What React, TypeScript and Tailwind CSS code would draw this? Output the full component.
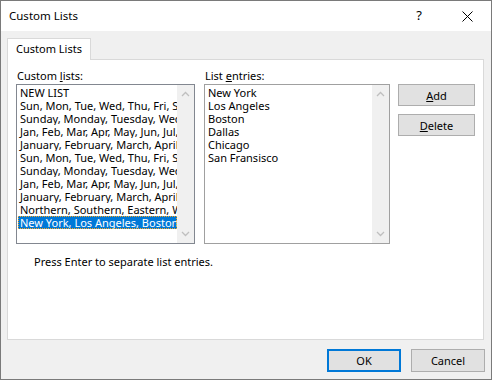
import React from 'react';

const customLists = [
  'NEW LIST',
  'Sun, Mon, Tue, Wed, Thu, Fri, Sat',
  'Sunday, Monday, Tuesday, Wednesday, Thursday',
  'Jan, Feb, Mar, Apr, May, Jun, Jul, Aug',
  'January, February, March, April, May',
  'Sun, Mon, Tue, Wed, Thu, Fri, Sat',
  'Sunday, Monday, Tuesday, Wednesday, Thursday',
  'Jan, Feb, Mar, Apr, May, Jun, Jul, Aug',
  'January, February, March, April, May',
  'Northern, Southern, Eastern, Western',
  'New York, Los Angeles, Boston, Dallas',
];

const entries = ['New York', 'Los Angeles', 'Boston', 'Dallas', 'Chicago', 'San Fransisco'];

function Chevron({ up }: { up?: boolean }) {
  return (
    <svg width="9" height="6" viewBox="0 0 9 6" className="block">
      <path d={up ? 'M1 5 L4.5 1.5 L8 5' : 'M1 1 L4.5 4.5 L8 1'} fill="none" stroke="#bfbfbf" strokeWidth="1.3" />
    </svg>
  );
}

function Scrollbar() {
  return (
    <div className="w-[17px] shrink-0 bg-[#f0f0f0] flex flex-col items-center justify-between py-[6px]">
      <Chevron up />
      <Chevron />
    </div>
  );
}

function Button({ children, primary }: { children: React.ReactNode; primary?: boolean }) {
  return (
    <button
      className={
        primary
          ? 'w-[74px] h-[23px] bg-[#e1e1e1] border-2 border-[#0078d7] text-[11px] leading-none text-black'
          : 'w-[74px] h-[23px] bg-[#e1e1e1] border border-[#adadad] text-[11px] leading-none text-black'
      }
    >
      {children}
    </button>
  );
}

export default function App() {
  return (
    <div className="w-[492px] h-[380px] border border-[#7a7a7a] bg-[#f0f0f0] flex flex-col font-['Segoe_UI','Noto_Sans',sans-serif] text-[11px] text-black overflow-hidden">
      <div className="h-[30px] bg-white flex items-center pl-[8px] shrink-0">
        <span className="text-[11.5px]">Custom Lists</span>
        <span className="ml-auto mr-[40px] text-[13px]">?</span>
        <svg width="11" height="11" viewBox="0 0 11 11" className="mr-[18px]">
          <path d="M0.5 0.5 L10.5 10.5 M10.5 0.5 L0.5 10.5" stroke="#000" strokeWidth="1" />
        </svg>
      </div>

      <div className="px-[6px] pt-[7px] flex flex-col">
        <div className="relative z-10 -mb-px w-[84px] h-[22px] bg-white border border-b-0 border-[#d9d9d9] flex items-center justify-center">
          Custom Lists
        </div>
        <div className="h-[281px] w-[477px] bg-white border border-[#d9d9d9] pl-[8px] pt-[7px] flex flex-col">
          <div className="flex">
            <div className="flex flex-col w-[179px]">
              <div className="h-[17px] leading-[17px] pl-px">
                Custom <span className="underline">l</span>ists:
              </div>
              <div className="h-[160px] border border-[#828790] flex">
                <div className="flex-1 min-w-0 pl-[1px] pt-px overflow-hidden">
                  {customLists.map((t, i) => (
                    <div
                      key={i}
                      className={
                        i === customLists.length - 1
                          ? 'h-[13px] leading-[13px] whitespace-nowrap overflow-hidden pl-[2px] bg-[#0078d7] text-white outline-1 outline-dotted outline-[#f5a623] -outline-offset-1'
                          : 'h-[13px] leading-[13px] whitespace-nowrap overflow-hidden pl-[2px]'
                      }
                    >
                      {t}
                    </div>
                  ))}
                </div>
                <Scrollbar />
              </div>
            </div>

            <div className="flex flex-col w-[186px] ml-[9px]">
              <div className="h-[17px] leading-[17px] pl-px">
                List <span className="underline">e</span>ntries:
              </div>
              <div className="h-[160px] border border-[#a0a0a0] flex">
                <div className="flex-1 min-w-0 pl-[3px] pt-[1px]">
                  {entries.map((t) => (
                    <div key={t} className="h-[13px] leading-[13px] whitespace-nowrap">
                      {t}
                    </div>
                  ))}
                </div>
                <Scrollbar />
              </div>
            </div>

            <div className="flex flex-col gap-[8px] ml-[8px] pt-[17px]">
              <button className="w-[77px] h-[22px] bg-[#e1e1e1] border border-[#adadad] text-[11px] leading-none">
                <span className="underline">A</span>dd
              </button>
              <button className="w-[77px] h-[22px] bg-[#e1e1e1] border border-[#adadad] text-[11px] leading-none">
                <span className="underline">D</span>elete
              </button>
            </div>
          </div>
          <div className="pl-[18px] mt-[10px]">Press Enter to separate list entries.</div>
        </div>
      </div>

      <div className="flex justify-end gap-[10px] pr-[6px] mt-[9px]">
        <Button primary>OK</Button>
        <Button>Cancel</Button>
      </div>
    </div>
  );
}
